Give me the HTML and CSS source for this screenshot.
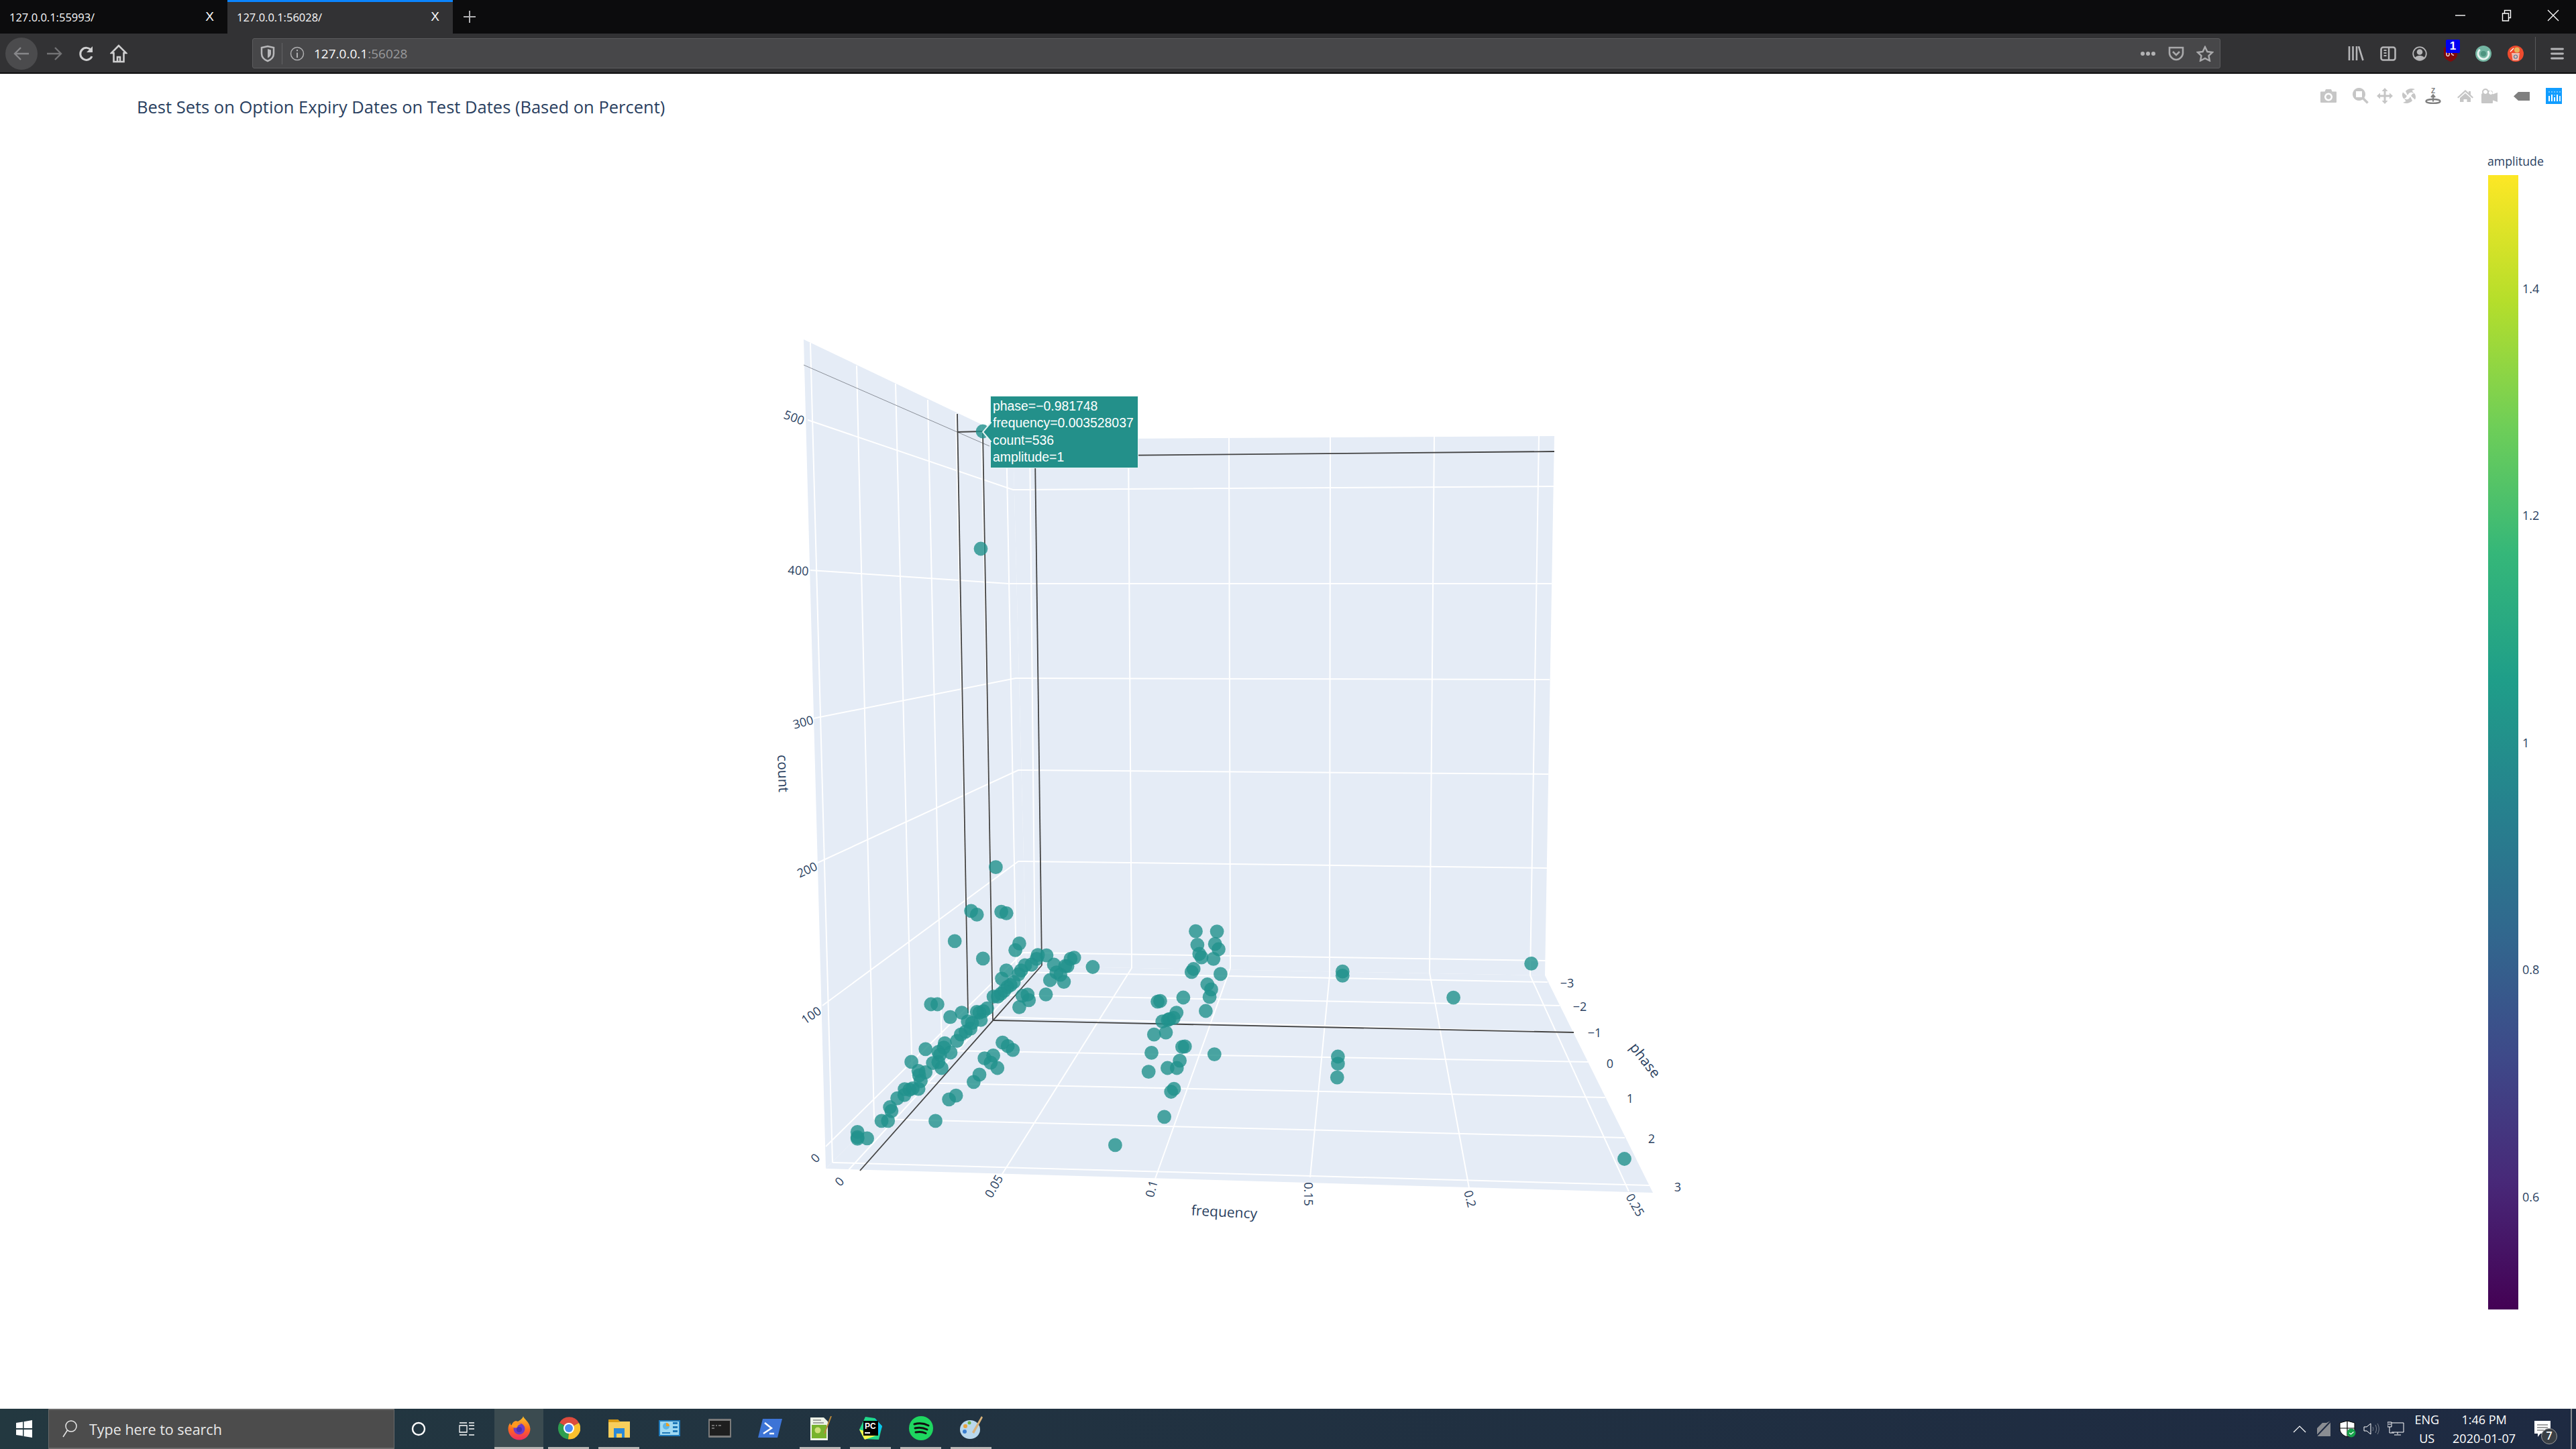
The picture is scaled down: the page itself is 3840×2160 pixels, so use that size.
FILE: index.html
```html
<!DOCTYPE html>
<html lang="en">
<head>
<meta charset="utf-8">
<title>127.0.0.1:56028</title>
<link rel="stylesheet" href="styles.css">
</head>
<body>
<header class="tabbar">
  <div class="tab"><span class="tab-label">127.0.0.1:55993/</span><span class="tab-close">X</span></div>
  <div class="tab tab-active"><span class="tab-label">127.0.0.1:56028/</span><span class="tab-close">X</span></div>
  <svg class="newtab" width="20" height="20" viewBox="0 0 20 20"><path d="M10 1v18M1 10h18" stroke="#b1b1b3" stroke-width="2"/></svg>
  <div class="winctl">
    <svg width="20" height="20" viewBox="0 0 20 20"><path d="M2 10h15" stroke="#fff" stroke-width="1.4"/></svg>
    <svg width="20" height="20" viewBox="0 0 20 20"><path d="M3.500 7h9v11h-9zM6.500 7V2.500h9v11h-3" fill="none" stroke="#fff" stroke-width="1.4"/></svg>
    <svg width="20" height="20" viewBox="0 0 20 20"><path d="M2 2l16 16M18 2L2 18" stroke="#fff" stroke-width="1.3"/></svg>
  </div>
</header>
<nav class="toolbar">
  <div class="navbtns">
    <span class="navbtn navbtn-back"><svg width="26" height="26" viewBox="0 0 26 26"><path d="M24 13H3M12 4l-9 9 9 9" fill="none" stroke="#87878a" stroke-width="2.4"/></svg></span>
    <span class="navbtn"><svg width="26" height="26" viewBox="0 0 26 26"><path d="M2 13h21M14 4l9 9-9 9" fill="none" stroke="#737375" stroke-width="2.4"/></svg></span>
    <span class="navbtn"><svg width="26" height="26" viewBox="0 0 26 26"><path d="M20 8a9 9 0 1 0 1 9" fill="none" stroke="#cfcfd0" stroke-width="3"/><path d="M22 2v9h-9z" fill="#cfcfd0"/></svg></span>
    <span class="navbtn"><svg width="26" height="28" viewBox="0 0 26 28"><path d="M13 2L2 13h3.500v13h15V13H24zM11 26v-7h4v7" fill="none" stroke="#cfcfd0" stroke-width="2.6"/></svg></span>
  </div>
  <div class="urlbar">
    <svg class="url-shield" width="22" height="26" viewBox="0 0 22 26"><path d="M2 4l9-2 9 2v9c0 6-4 9-9 11-5-2-9-5-9-11z" fill="none" stroke="#b8b8ba" stroke-width="2.500"/><path d="M11 6l5 1.500V13c0 3-2 5-5 6.500z" fill="#b8b8ba"/></svg>
    <span class="url-sep"></span>
    <svg class="url-info" width="22" height="22" viewBox="0 0 22 22"><circle cx="11" cy="11" r="9.500" fill="none" stroke="#b0b0b2" stroke-width="1.500"/><path d="M11 9.500V17M11 5v2.200" stroke="#b0b0b2" stroke-width="2"/></svg>
    <span class="url-text">127.0.0.1<span class="url-port">:56028</span></span>
    <span class="url-actions">
      <svg width="24" height="8" viewBox="0 0 24 8"><circle cx="4" cy="4" r="3" fill="#b2b2b4"/><circle cx="12" cy="4" r="3" fill="#b2b2b4"/><circle cx="20" cy="4" r="3" fill="#b2b2b4"/></svg>
      <svg width="24" height="22" viewBox="0 0 24 22"><path d="M2 2h20v8c0 5-5 10-10 10S2 15 2 10z" fill="none" stroke="#a9a9ab" stroke-width="2.600"/><path d="M7 8l5 5 5-5" fill="none" stroke="#a9a9ab" stroke-width="2.600"/></svg>
      <svg width="26" height="24" viewBox="0 0 26 24"><path d="M13 2l3.400 7 7.600 1-5.500 5.200 1.400 7.300L13 19l-6.900 3.500 1.400-7.300L2 10l7.600-1z" fill="none" stroke="#a9a9ab" stroke-width="2.500"/></svg>
    </span>
  </div>
  <div class="toolicons">
    <svg width="24" height="22" viewBox="0 0 24 22"><path d="M2 0v21M7.500 0v21M13 0v21M16 0l6.500 21" stroke="#b5b5b7" stroke-width="2.600" fill="none"/></svg>
    <svg width="24" height="22" viewBox="0 0 24 22"><rect x="1.500" y="1.500" width="21" height="19" rx="3" fill="none" stroke="#b5b5b7" stroke-width="2.600"/><path d="M13 1.500v19" stroke="#b5b5b7" stroke-width="2.400"/><path d="M5.500 6h4M5.500 10h4M5.500 14h4" stroke="#b5b5b7" stroke-width="1.800"/></svg>
    <svg width="22" height="22" viewBox="0 0 22 22"><circle cx="11" cy="11" r="9.800" fill="none" stroke="#b5b5b7" stroke-width="1.800"/><circle cx="11" cy="8.500" r="4.300" fill="#b5b5b7"/><path d="M3.800 17.500c1-4.800 13.400-4.800 14.400 0-3 3.600-11.400 3.600-14.400 0z" fill="#b5b5b7"/></svg>
    <span class="ublock">
      <svg width="22" height="24" viewBox="0 0 22 24"><path d="M1 3l10-2 10 2v10c0 5-5 9-10 11C6 22 1 18 1 13z" fill="#800a0a"/><path d="M5 8v6c0 2 4 2 4 0V8M16 9c-4-2-5 6 0 5" fill="none" stroke="#fff" stroke-width="1.300"/></svg>
      <span class="ublock-badge">1</span>
    </span>
    <svg width="24" height="24" viewBox="0 0 24 24"><circle cx="12" cy="12" r="12" fill="#73b5a2"/><circle cx="12" cy="12" r="8" fill="none" stroke="#e8f4f0" stroke-width="3" stroke-dasharray="36 14" transform="rotate(-30 12 12)"/><circle cx="12" cy="12" r="4" fill="#4d9480"/></svg>
    <svg width="24" height="24" viewBox="0 0 24 24"><circle cx="12" cy="12" r="12" fill="#ee4b2e"/><path d="M6 11h12l-1.500 11h-9z" fill="#f1b7ad"/><circle cx="14" cy="6.500" r="4" fill="#e6b25a"/><path d="M4 9l5-5" stroke="#fff" stroke-width="1.200"/><circle cx="12" cy="16.500" r="2.500" fill="none" stroke="#4d7f9a" stroke-width="1.200"/></svg>
    <span class="tool-sep"></span>
    <svg class="tool-menu" width="20" height="20" viewBox="0 0 20 20"><path d="M1.500 3h17M1.500 10h17M1.500 17h17" stroke="#b5b5b7" stroke-width="2.800" stroke-linecap="round"/></svg>
  </div>
</nav>

<main class="plot">
  <h1 class="plot-title">Best Sets on Option Expiry Dates on Test Dates (Based on Percent)</h1>

  <svg class="scene" width="3840" height="1990" viewBox="0 110 3840 1990">
    <polygon class="wall" points="1198,506 1510,655 1530,1440 1231,1742"/>
    <polygon class="wall" points="1510,655 2317,650 2303,1454 1530,1440"/>
    <polygon class="wall" points="1231,1742 1530,1440 2303,1454 2464,1778"/>

    <g class="grid">
      <path d="M1204,626L1510,730L2316,725"/>
      <path d="M1208,850L1503,870L2313,870"/>
      <path d="M1212,1071L1514,1011L2310,1013"/>
      <path d="M1219,1286L1518,1148L2308,1154"/>
      <path d="M1226,1499L1518,1284L2306,1294"/>
      <path d="M1231,1709L1525,1420L2304,1432"/>

      <path d="M1208,511L1241,1733"/>
      <path d="M1277,545L1303,1668"/>
      <path d="M1335,572L1360,1614"/>
      <path d="M1383,596L1404,1566"/>
      <path d="M1425,616L1443,1515"/>
      <path d="M1463,634L1480,1483"/>
      <path d="M1500,650L1515,1449"/>

      <path d="M1535,655L1543,1440L1265,1744"/>
      <path d="M1682,654L1687,1443L1494,1750"/>
      <path d="M1832,653L1834,1443L1722,1757"/>
      <path d="M1983,652L1982,1454L1953,1755"/>
      <path d="M2138,651L2131,1450L2190,1771"/>
      <path d="M2294,650L2281,1454L2428,1776"/>

      <path d="M1515,1449L2307,1464"/>
      <path d="M1480,1483L2325,1499"/>
      <path d="M1443,1515L2346,1539"/>
      <path d="M1404,1566L2368,1583"/>
      <path d="M1360,1614L2393,1636"/>
      <path d="M1303,1668L2422,1696"/>
      <path d="M1241,1733L2459,1767"/>
    </g>

    <g class="spikes">
      <path class="spike-thin" d="M1198,544L1475,665"/>
      <path d="M1427,617L1443,1510"/>
      <path d="M1465,643L1480,1521"/>
      <path d="M1427,644L1465,643"/>
      <path d="M1543,680L1553,1439"/>
      <path d="M1543,680L2317,673"/>
      <path d="M1282,1745L1553,1439"/>
      <path d="M1480,1521L2346,1539"/>
    </g>

    <g id="points"></g>

    <g class="ticks">
      <text transform="translate(1184 622) rotate(20)">500</text>
      <text transform="translate(1190 850) rotate(4)">400</text>
      <text transform="translate(1197 1076) rotate(-15)">300</text>
      <text transform="translate(1203 1296) rotate(-25)">200</text>
      <text transform="translate(1209 1513) rotate(-35)">100</text>
      <text transform="translate(1215 1726) rotate(-45)">0</text>

      <text transform="translate(1251 1761) rotate(-45)">0</text>
      <text transform="translate(1481 1768) rotate(-60)">0.05</text>
      <text transform="translate(1716 1772) rotate(-75)">0.1</text>
      <text transform="translate(1951 1780) rotate(90)">0.15</text>
      <text transform="translate(2192 1787) rotate(75)">0.2</text>
      <text transform="translate(2438 1796) rotate(60)">0.25</text>

      <text transform="translate(2336 1465)">−3</text>
      <text transform="translate(2355 1500)">−2</text>
      <text transform="translate(2377 1539)">−1</text>
      <text transform="translate(2400 1585)">0</text>
      <text transform="translate(2430 1637)">1</text>
      <text transform="translate(2462 1697)">2</text>
      <text transform="translate(2501 1769)">3</text>
    </g>
    <g class="axis-titles">
      <text transform="translate(1168 1153) rotate(88)">count</text>
      <text transform="translate(1825 1806) rotate(3)">frequency</text>
      <text transform="translate(2453 1580) rotate(52)">phase</text>
    </g>
  </svg>

  <div class="hover">
    <svg class="hover-arrow" width="14" height="30" viewBox="0 0 14 30"><path d="M14 0L1 15l13 15" fill="#23908a" stroke="#e8f4f3" stroke-width="2"/></svg>
    <div>phase=−0.981748</div>
    <div>frequency=0.003528037</div>
    <div>count=536</div>
    <div>amplitude=1</div>
  </div>

  <div class="modebar">
    <div class="mb-group">
      <svg width="24" height="20" viewBox="0 0 24 20"><path class="mb-fill" fill-rule="evenodd" d="M1 3.500h5.500L8 0h8l1.500 3.500H23a1 1 0 0 1 1 1V19a1 1 0 0 1-1 1H1a1 1 0 0 1-1-1V4.500a1 1 0 0 1 1-1zM12 5.500a6 6 0 1 0 .01 0zM12 8a3.500 3.500 0 1 1-.01 0z"/></svg>
    </div>
    <div class="mb-group">
      <svg width="24" height="24" viewBox="0 0 24 24"><path class="mb-fill" fill-rule="evenodd" d="M9.500 0a9.500 9.500 0 1 0 .01 0zM5 5h9v9H5z"/><path class="mb-line" d="M15 15l7.500 7.500" stroke-width="3.600"/></svg>
      <svg width="24" height="24" viewBox="0 0 24 24"><path class="mb-fill" d="M12 0l4.500 5h-3v5.500H19v-3l5 4.500-5 4.500v-3h-5.500V19h3L12 24l-4.500-5h3v-5.500H5v3L0 12l5-4.500v3h5.500V5h-3z"/></svg>
      <svg width="24" height="24" viewBox="0 0 24 24"><path class="mb-fill" d="M7 5C10 1.500 15 0 21 2l-4.500 2 3 4.500C16 5.500 12 6.500 10 11zM17 19c-3 3.500-8 5-14 3l4.500-2-3-4.500c3.500 3 7.500 2 9.500-2.500zM3 6.500l6 5.500-2 3-3 1C1.500 13 1.500 9 3 6.500zM21 17.500L15 12l2-3 3-1c2.500 3 2.500 7 1 9.500z"/></svg>
      <svg width="24" height="24" viewBox="0 0 24 24"><text class="mb-z" x="12" y="8">Z</text><path class="mb-active-line" fill="none" stroke-width="2.200" d="M12 20.500V11M9 14l3-3.500 3 3.500"/><ellipse class="mb-active-line" fill="none" stroke-width="2.400" cx="12" cy="20" rx="10.500" ry="3"/></svg>
    </div>
    <div class="mb-group">
      <svg width="24" height="18" viewBox="0 0 24 18"><path class="mb-fill" d="M12 0l5 4.500V2h3v5.300L24 11l-1.500 1.500L12 3 1.500 12.500 0 11zM4 12l8-7 8 7v6h-5.500v-4h-5v4H4z"/></svg>
      <svg width="24" height="22" viewBox="0 0 24 22"><path class="mb-fill" fill-rule="evenodd" d="M6 0a5 5 0 0 1 4.500 3 5.500 5.500 0 0 1 6.500 5.500l7-2.500V20l-7-2.500V21a1 1 0 0 1-1 1H1a1 1 0 0 1-1-1V9a2 2 0 0 1 1.500-2A5 5 0 0 1 6 0zM14 3a3 3 0 1 0 .01 0zM6 2a3 3 0 1 0 .01 0z"/></svg>
    </div>
    <div class="mb-group">
      <svg width="24" height="13" viewBox="0 0 24 13"><path class="mb-active" d="M7 0h17v13H7L0 6.500z"/></svg>
    </div>
    <div class="mb-group">
      <svg width="24" height="24" viewBox="0 0 24 24"><rect width="24" height="24" fill="#119dff"/><g fill="#fff"><rect x="4" y="12" width="2" height="8"/><rect x="8" y="10" width="2" height="10"/><rect x="12" y="14" width="2" height="6"/><rect x="16" y="10" width="2" height="10"/><rect x="20" y="12" width="2" height="8" opacity=".85"/></g><g fill="#8fd2ff"><circle cx="5" cy="6" r="1"/><circle cx="9" cy="6" r="1"/><circle cx="13" cy="6" r="1"/><circle cx="17" cy="6" r="1"/><circle cx="21" cy="6" r="1"/><circle cx="13" cy="11" r="1"/></g></svg>
    </div>
  </div>

  <aside class="colorbar">
    <div class="cb-title">amplitude</div>
    <div class="cb-body">
      <div class="cb-ramp"></div>
      <div class="cb-ticks">
        <span>1.4</span><span>1.2</span><span>1</span><span>0.8</span><span>0.6</span>
      </div>
    </div>
  </aside>
</main>

<footer class="taskbar">
  <div class="start"><svg width="26" height="26" viewBox="0 0 26 26"><path d="M1 4l10-1.500V12H1zM12.500 2.300L25 0v12H12.500zM1 14h10v9.500L1 22zM12.500 14H25v12l-12.500-2z" fill="#fff"/></svg></div>
  <div class="search">
    <svg width="24" height="28" viewBox="0 0 24 28"><circle cx="14" cy="10" r="8" fill="none" stroke="#e8e8e8" stroke-width="1.500"/><path d="M8.500 16L2 26" stroke="#e8e8e8" stroke-width="1.500"/></svg>
    <span>Type here to search</span>
  </div>
  <div class="sys-btn"><svg width="22" height="22" viewBox="0 0 22 22"><circle cx="11" cy="11" r="9" fill="none" stroke="#fff" stroke-width="2.400"/></svg></div>
  <div class="sys-btn"><svg width="24" height="22" viewBox="0 0 24 22"><path d="M1 6h11v10H1zM1 2h11M1 20h11M15 6h8M15 2h8M15 20h8M15 11h8" fill="none" stroke="#fff" stroke-width="1.300"/></svg></div>

  <div class="apps">
    <div class="app app-active app-open"><svg width="34" height="36" viewBox="0 0 34 36"><defs><linearGradient id="ff" x1="0" y1="0" x2="0" y2="1"><stop offset="0" stop-color="#ffc42b"/><stop offset=".55" stop-color="#ff6a1d"/><stop offset="1" stop-color="#ee2a66"/></linearGradient></defs><path d="M23 0c0 4 10 8 10.500 19A16.500 16.500 0 0 1 .5 19c0-4 1.500-7 3-9 0 2 1 3 2 4C7 9 11 6 15 8c3-2 7-4 8-8z" fill="url(#ff)"/><circle cx="17" cy="19" r="8.500" fill="#6d3bc9"/><path d="M5 14c4-4 11-5 15-2-4 0-6 3-6 5-4 1-7 0-9-3z" fill="#ff9a1f"/><circle cx="17" cy="20" r="4" fill="#4a2fb0"/></svg></div>
    <div class="app app-open"><svg width="34" height="34" viewBox="0 0 34 34"><path d="M17 17L3 9a16.500 16.500 0 0 1 29 0z" fill="#dd4b3e"/><path d="M17 17L32 9a16.500 16.500 0 0 1-16 24.500z" fill="#fbc02d"/><path d="M17 17L16 33.500A16.500 16.500 0 0 1 3 9z" fill="#2e9e4f"/><circle cx="17" cy="17" r="8" fill="#fff"/><circle cx="17" cy="17" r="6" fill="#4a8bf5"/></svg></div>
    <div class="app app-open"><svg width="34" height="28" viewBox="0 0 34 28"><path d="M1 1h14l3 3h15v24H1z" fill="#f7ce5c"/><path d="M1 1h14l3 4H1z" fill="#d99a12"/><path d="M9 14h16v14h-4v-6h-8v6H9z" fill="#2a88d8"/></svg></div>
    <div class="app"><svg width="32" height="24" viewBox="0 0 32 24"><rect x="0" y="0" width="32" height="24" fill="#1e78b8"/><rect x="2" y="2" width="28" height="20" fill="#9fd9f3"/><circle cx="11" cy="9" r="5" fill="#5fb6e6"/><path d="M11 9V4a5 5 0 0 1 5 5z" fill="#f0a020"/><rect x="21" y="3" width="7" height="3" fill="#1e78b8"/><rect x="21" y="9" width="7" height="3" fill="#1e78b8"/><rect x="21" y="15" width="7" height="3" fill="#1e78b8"/><path d="M5 19h12" stroke="#1e78b8" stroke-width="2"/></svg></div>
    <div class="app"><svg width="34" height="28" viewBox="0 0 34 28"><rect width="34" height="28" rx="1" fill="#7a7a7a"/><rect x="2" y="3" width="30" height="22" fill="#1e1e1e"/><path d="M5 10h4M11 10h2M15 10h4M5 14h4" stroke="#8a8a8a" stroke-width="1.500"/></svg></div>
    <div class="app"><svg width="36" height="28" viewBox="0 0 36 28"><path d="M7 0h29l-7 28H0z" fill="#3d74d6"/><path d="M10 6l10 8-12 8" fill="none" stroke="#fff" stroke-width="2.500"/><path d="M17 22h7" stroke="#fff" stroke-width="2.500"/></svg></div>
    <div class="app app-open"><svg width="34" height="36" viewBox="0 0 34 36"><path d="M2 2h20l6 6v28H2z" fill="#eef3e8"/><rect x="4" y="13" width="22" height="20" fill="#78b32e"/><path d="M6 10h16M6 6h12" stroke="#555" stroke-width="1.200"/><circle cx="13" cy="21" r="4.500" fill="#cfe07a"/><path d="M33 0L23 26" stroke="#b8873a" stroke-width="2"/></svg></div>
    <div class="app app-open"><svg width="36" height="36" viewBox="0 0 36 36"><path d="M10 1l14 2 11 12-5 20-22-1L1 20z" fill="#21d789"/><path d="M24 3l11 12-5 14z" fill="#07c3f2"/><path d="M1 20l8 15 20-7z" fill="#fcf84a"/><rect x="7" y="7" width="22" height="22" fill="#000"/><text class="pc-glyph" x="9" y="19">PC</text><rect x="9" y="24" width="8" height="2" fill="#fff"/></svg></div>
    <div class="app app-open"><svg width="36" height="36" viewBox="0 0 36 36"><circle cx="18" cy="18" r="18" fill="#1ed760"/><path d="M8 12c7-2 14-1.500 21 2M9 18c6-1.500 12-1 18 2M10 24c5-1 10-1 15 1.500" fill="none" stroke="#111" stroke-width="3" stroke-linecap="round"/></svg></div>
    <div class="app app-open"><svg width="36" height="36" viewBox="0 0 36 36"><ellipse cx="16" cy="20" rx="15" ry="14" fill="#b9d8ec"/><circle cx="9" cy="15" r="3" fill="#e8a33d"/><circle cx="15" cy="10" r="2.500" fill="#6fb544"/><circle cx="8" cy="23" r="3" fill="#3a7fd0"/><path d="M33 0l2 2-13 24-3-2z" fill="#d9b27a"/></svg></div>
  </div>

  <div class="tray">
    <svg class="tray-chevron" width="20" height="12" viewBox="0 0 20 12"><path d="M1 11l9-9 9 9" fill="none" stroke="#fff" stroke-width="1.200"/></svg>
    <svg class="tray-cloud" width="26" height="26" viewBox="0 0 26 26"><path d="M3 24V12l8-8h6l6-3v23z" fill="#8a8d92"/><path d="M1 25L24 1" stroke="#1e2a42" stroke-width="2"/></svg>
    <svg class="tray-shield" width="26" height="26" viewBox="0 0 26 26"><path d="M12 1l11 3v9c0 6-5 10-11 12C6 23 1 19 1 13V4z" fill="#fff" stroke="#000" stroke-width="1"/><path d="M12 1v24M1 12h22" stroke="#000" stroke-width="1.200"/><circle cx="18" cy="19" r="6.500" fill="#16a14a"/><path d="M15 19l2.500 2 4-3.500" fill="none" stroke="#fff" stroke-width="1.200"/></svg>
    <svg class="tray-speaker" width="24" height="20" viewBox="0 0 24 20"><path d="M1 7h4l6-5v16l-6-5H1z" fill="none" stroke="#fff" stroke-width="1"/><path d="M14 7c1 2 1 4 0 6M18 4c2 4 2 8 0 12M21 2c3 5 3 11 0 16" fill="none" stroke="#7a808c" stroke-width="1"/></svg>
    <svg class="tray-net" width="26" height="22" viewBox="0 0 26 22"><path d="M6 2h18v14H6M15 16v3M10 20h10M0 1h6v7H0zM3 8v9h7M1 4h4" fill="none" stroke="#fff" stroke-width="1"/></svg>
    <div class="tray-lang"><span>ENG</span><span>US</span></div>
    <div class="tray-clock"><span>1:46 PM</span><span>2020-01-07</span></div>
    <span class="notify">
      <svg width="26" height="26" viewBox="0 0 26 26"><path d="M1 1h24v19H10l-4 5v-5H1z" fill="#fff"/><path d="M5 7h16M5 11h16M5 15h10" stroke="#444" stroke-width="1"/></svg>
      <span class="notify-badge">7</span>
    </span>
    <span class="show-desktop"></span>
  </div>
</footer>
<script src="scatter.js"></script>
</body>
</html>
```

FILE: styles.css
```css
* { box-sizing: border-box; }
html, body { margin: 0; padding: 0; }
body {
  width: 3840px;
  height: 2160px;
  overflow: hidden;
  display: flex;
  flex-direction: column;
  background: #fff;
  font-family: "Open Sans", "Noto Sans", sans-serif;
}

/* browser tabs */
.tabbar {
  height: 50px;
  flex: none;
  display: flex;
  align-items: stretch;
  background: #0c0c0d;
  color: #f9f9fa;
}
.tab {
  width: 339px;
  display: flex;
  align-items: center;
  justify-content: space-between;
  padding: 0 20px 0 14px;
  font-size: 16.5px;
}
.tab-active {
  width: 336px;
  background: #323234;
  border-top: 3px solid #0a84ff;
  padding-bottom: 3px;
}
.tab-close { font-size: 19px; font-family: "Liberation Sans", sans-serif; }
.newtab { align-self: center; margin-left: 15px; }
.winctl {
  margin-left: auto;
  width: 207px;
  display: flex;
  justify-content: space-between;
  align-items: center;
  padding: 0 24px 4px 25px;
}

/* browser toolbar */
.toolbar {
  height: 60px;
  flex: none;
  display: flex;
  align-items: center;
  background: #323234;
  border-bottom: 2px solid #0c0c0d;
  padding-top: 1px;
}
.navbtns {
  width: 376px;
  display: flex;
  align-items: center;
  padding-left: 8px;
}
.navbtn {
  width: 48px;
  height: 48px;
  border-radius: 50%;
  display: flex;
  align-items: center;
  justify-content: center;
}
.navbtn-back { background: #4b4b4d; margin-right: 1px; }
.urlbar {
  width: calc(3310px - 376px);
  height: 45px;
  flex: none;
  display: flex;
  align-items: center;
  background: #474749;
  border: 1px solid #5c5c5e;
  border-radius: 3px;
  padding-left: 11px;
  font-size: 19px;
}
.url-sep { width: 1px; height: 32px; background: #636365; margin: 0 11px 0 10px; }
.url-text { color: #f9f9fa; margin-left: 14px; }
.url-port { color: #9a9a9c; }
.url-actions {
  margin-left: auto;
  display: flex;
  align-items: center;
  gap: 18px;
  padding-right: 9px;
}
.toolicons {
  flex: 1;
  display: flex;
  align-items: center;
  justify-content: flex-end;
  gap: 24px;
  padding-right: 18px;
}
.ublock { position: relative; display: block; height: 24px; width: 24px; }
.ublock-badge {
  position: absolute;
  left: 4px;
  top: -9px;
  width: 21px;
  height: 20px;
  background: #0000f0;
  color: #fff;
  border-radius: 2px;
  font: bold 17px/20px "Liberation Sans", sans-serif;
  text-align: center;
}
.tool-sep { width: 1px; height: 50px; background: #5a5a5c; margin-left: -7px; }
.tool-menu { margin-left: -2px; }

/* plot */
.plot {
  position: relative;
  flex: 1;
  background: #fff;
  min-height: 0;
}
.plot-title {
  margin: 0;
  padding: 32px 0 0 204px;
  font-size: 25.5px;
  line-height: 34px;
  font-weight: 400;
  color: #2a3f5f;
}
.scene { position: absolute; left: 0; top: 0; }
.wall { fill: #e5ecf6; }
.grid path { fill: none; stroke: #fff; stroke-width: 2; }
.spikes path { fill: none; stroke: #444; stroke-width: 1.8; }
.spikes .spike-thin { stroke: #8a8f98; stroke-width: 1; }
.point { fill: #21918c; fill-opacity: .8; }
.ticks text, .axis-titles text {
  fill: #2a3f5f;
  text-anchor: middle;
  dominant-baseline: central;
  font-family: "Open Sans", sans-serif;
}
.ticks text { font-size: 18px; }
.axis-titles text { font-size: 21px; }

.hover {
  position: absolute;
  left: 1476px;
  top: 480px;
  width: 221px;
  height: 108px;
  padding: 2px 0 0 3px;
  background: #23908a;
  border: 1px solid #e8f4f3;
  color: #fff;
  font-family: "Liberation Sans", Arial, sans-serif;
  font-size: 19.4px;
  line-height: 25.3px;
  white-space: nowrap;
}
.hover-arrow { position: absolute; left: -13px; top: 38px; }

.modebar {
  position: absolute;
  top: 21px;
  right: 21px;
  display: flex;
  align-items: center;
  gap: 24px;
}
.mb-group { display: flex; align-items: center; gap: 12px; }
.mb-fill { fill: #c6c6c6; }
.mb-line { stroke: #c6c6c6; }
.mb-active { fill: #7f7f7f; }
.mb-active-line { stroke: #7f7f7f; }
.mb-z { fill: #7f7f7f; font: bold 10px "Liberation Sans", sans-serif; text-anchor: middle; }

.colorbar {
  position: absolute;
  left: 3700px;
  top: 118px;
  width: 120px;
  display: flex;
  flex-direction: column;
  color: #2a3f5f;
  font-size: 17.7px;
}
.cb-title { line-height: 24px; padding-left: 8px; height: 33px; }
.cb-body { display: flex; margin-left: 9px; height: 1691px; }
.cb-ramp {
  width: 45px;
  background: linear-gradient(to bottom, #fde725, #b5de2b, #6ece58, #35b779, #1f9e89, #26828e, #31688e, #3e4989, #482878, #440154);
}
.cb-ticks {
  display: grid;
  grid-template-rows: repeat(5, 338.5px);
  margin-left: 6px;
  align-items: center;
  align-content: center;
  font-size: 18px;
}

/* taskbar */
.taskbar {
  height: 60px;
  flex: none;
  display: flex;
  align-items: stretch;
  background: linear-gradient(to right, #233840, #1e2a42);
  color: #fff;
}
.start { width: 72px; display: flex; align-items: center; justify-content: center; }
.search {
  width: 516px;
  display: flex;
  align-items: center;
  gap: 17px;
  padding-left: 19px;
  background: #4c4c4c;
  border: 1px solid #6a6a6a;
  border-width: 2px 1px 2px 1px;
  color: #e8e8e8;
  font-size: 21.5px;
}
.sys-btn { width: 72px; display: flex; align-items: center; justify-content: center; }
.apps { display: flex; margin-left: 5px; margin-left: 5px; }
.app {
  position: relative;
  width: 75px;
  display: flex;
  align-items: center;
  justify-content: center;
  padding-bottom: 2px;
}
.app:first-child { width: 73px; }
.app-active { background: #3b4b50; }
.app-open::after {
  content: "";
  position: absolute;
  left: 7px;
  right: 7px;
  bottom: 0;
  height: 3px;
  background: #b5b5b3;
}
.app-active::after { left: 0; right: 0; }
.pc-glyph { fill: #fff; font: bold 12px "Liberation Sans", sans-serif; }
.tray {
  margin-left: auto;
  display: flex;
  align-items: center;
  font-size: 18px;
}
.tray-cloud { margin-left: 13px; }
.tray-shield { margin-left: 10px; }
.tray-speaker { margin-left: 10px; }
.tray-net { margin-left: 12px; }
.tray-lang, .tray-clock {
  display: flex;
  flex-direction: column;
  align-items: center;
  line-height: 28px;
}
.tray-lang { margin-left: 14px; }
.tray-clock { margin-left: 20px; }
.notify { position: relative; display: block; width: 26px; height: 26px; margin-left: 27px; }
.notify-badge {
  position: absolute;
  left: 11px;
  top: 12px;
  width: 24px;
  height: 24px;
  border-radius: 50%;
  background: #3a3f45;
  border: 1px solid #9a9a9a;
  font-size: 16px;
  font-weight: 600;
  line-height: 21px;
  text-align: center;
}
.show-desktop { width: 2px; height: 60px; background: #8a8d92; margin-right: 6px; margin-left: 29px; }
```

FILE: scatter.js
```js
// Projected marker positions. Each set is given in its own reference frame.
var sets = [
  { ox: 1150, oy: 1180, sx: 2.09, sy: 2.306, pts: [
    [699,260],[622,410],[640,423],[716,413],[732,418],[571,514],[659,574],[772,522],[760,545],
    [857,563],[830,562],[826,575],[810,595],[790,597],[778,615],[770,628],[880,595],[888,622],
    [915,600],[922,600],[932,575],[943,571],[868,648],[911,654],[900,630],[1001,603],[732,615],
    [718,643],[755,655],[745,665],[735,672],[725,685],[715,695],[705,705],[692,705],[855,697],
    [782,702],[798,698],[802,717],[772,741],[672,745],[660,755],[648,760],[640,757],[652,785],
    [625,795],[612,790],[593,760],[557,775],[497,731],[517,731],[620,815],[605,825],[590,835],
    [578,857],[540,865],[537,880],[480,885],[558,897],[520,895],[525,905],[503,933],[520,930],
    [530,950],[436,929],[480,965],[458,960],[460,975],[465,995],[458,1022],[440,1020],[430,1025],
    [415,1023],[414,1043],[392,1054],[369,1085],[374,1098],[343,1132],[363,1132],[268,1170],
    [268,1188],[268,1193],[298,1192],
    [720,863],[736,875],[752,888],[691,907],[664,917],[683,932],[704,950],[648,973],[630,998],
    [575,1045],[553,1058],[511,1132],[1071,1215],
    [1322,480],[1388,481],[1327,527],[1382,524],[1393,542],[1333,558],[1340,570],[1377,575],
    [1315,610],[1309,620],[1399,627],[1358,663],[1370,680],[1365,706],[1353,754],[1283,708],
    [1203,722],[1211,720],[1262,760],[1253,778],[1240,782],[1235,785],[1218,790],[1229,828],
    [1192,835],[1280,878],[1288,876],[1184,898],[1380,903],[1272,925],[1234,950],[1263,950],
    [1175,963],[1254,1022],[1245,1032],[1224,1118]
  ]},
  { ox: 1650, oy: 1300, sx: 1.742, sy: 2.8, pts: [
    [612,415],[612,432],[600,770],[600,800],[598,857],[900,524],[1102,382],[1344,1197]
  ]},
  { ox: 0, oy: 0, sx: 1, sy: 1, pts: [[1465,643],[1462,818]] }
];

var group = document.getElementById("points");
var NS = "http://www.w3.org/2000/svg";
sets.forEach(function (set) {
  set.pts.forEach(function (p) {
    var c = document.createElementNS(NS, "circle");
    c.setAttribute("class", "point");
    c.setAttribute("cx", (set.ox + p[0] / set.sx).toFixed(1));
    c.setAttribute("cy", (set.oy + p[1] / set.sy).toFixed(1));
    c.setAttribute("r", "10.4");
    group.appendChild(c);
  });
});
```
